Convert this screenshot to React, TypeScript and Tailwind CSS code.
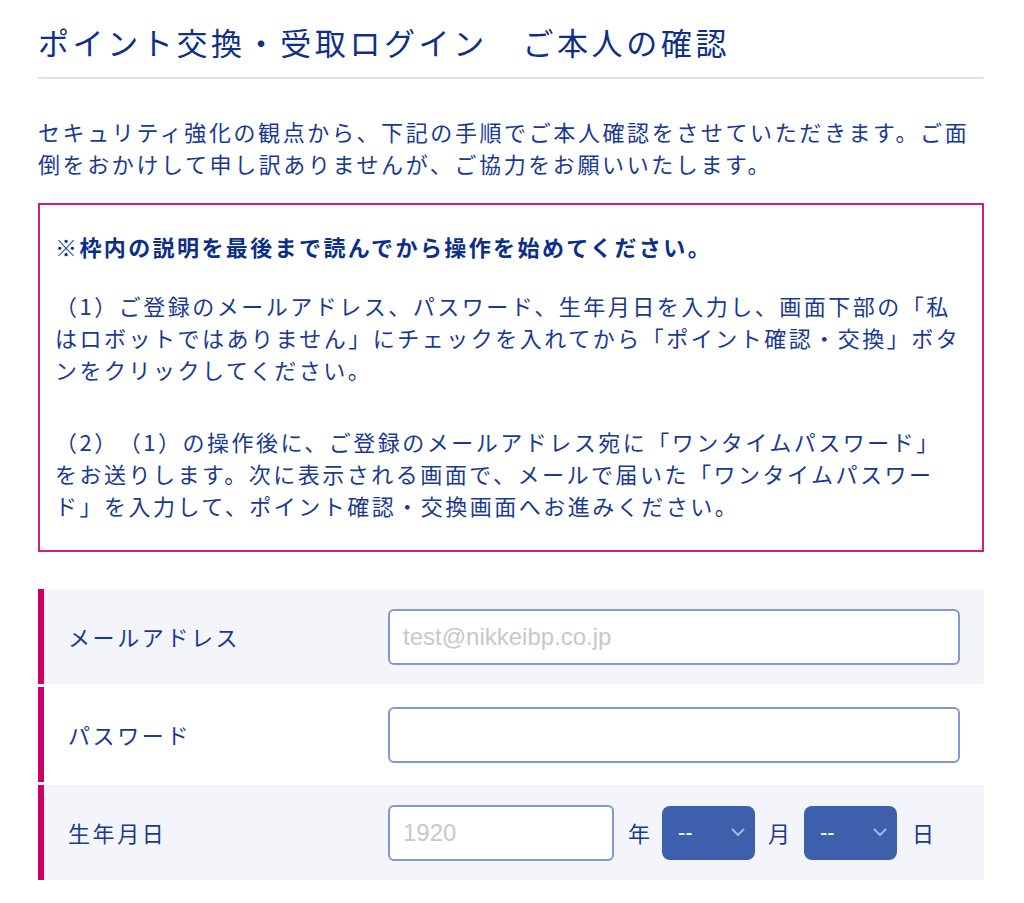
const font = { fontFamily: '"Noto Sans CJK JP", "Noto Sans", sans-serif' };

function Chevron() {
  return (
    <svg width="14" height="9" viewBox="0 0 14 9" fill="none" className="shrink-0">
      <path d="M1.5 1.5 7 7l5.5-5.5" stroke="#a8b8e0" strokeWidth="2" strokeLinecap="round" strokeLinejoin="round" />
    </svg>
  );
}

function DaySelect() {
  return (
    <div className="flex h-[54px] w-[93px] items-center justify-between rounded-[8px] bg-[#3e5fab] pl-[16px] pr-[10px]">
      <span className="text-[22px] leading-none text-white" style={{ fontFamily: '"Liberation Sans", Arial, sans-serif' }}>
        --
      </span>
      <Chevron />
    </div>
  );
}

type Row = { label: string; shaded: boolean; body: React.ReactNode };

export default function App() {
  const rows: Row[] = [
    {
      label: "メールアドレス",
      shaded: true,
      body: (
        <div className="flex h-[56px] w-[572px] items-center rounded-[6px] border-2 border-[#8199d1] bg-white pl-[13px]">
          <span className="text-[24px] text-[#c8c8c8]" style={{ fontFamily: '"Liberation Sans", Arial, sans-serif' }}>
            test@nikkeibp.co.jp
          </span>
        </div>
      ),
    },
    {
      label: "パスワード",
      shaded: false,
      body: <div className="h-[56px] w-[572px] rounded-[6px] border-2 border-[#8199d1] bg-white" />,
    },
    {
      label: "生年月日",
      shaded: true,
      body: (
        <div className="flex items-center">
          <div className="flex h-[56px] w-[226px] items-center rounded-[6px] border-2 border-[#8199d1] bg-white pl-[13px]">
            <span className="text-[24px] text-[#c8c8c8]" style={{ fontFamily: '"Liberation Sans", Arial, sans-serif' }}>
              1920
            </span>
          </div>
          <span className="ml-[14px] mr-[12px] text-[22px] text-[#1a3a8f]">年</span>
          <DaySelect />
          <span className="ml-[13px] mr-[14px] text-[22px] text-[#1a3a8f]">月</span>
          <DaySelect />
          <span className="ml-[15px] text-[22px] text-[#1a3a8f]">日</span>
        </div>
      ),
    },
  ];

  return (
    <main
      className="bg-white pl-[38px] pr-[40px] pt-[22px] pb-[24px] text-[#1a3a8f] [text-spacing-trim:space-all]"
      style={font}
    >
      <h1 className="border-b-2 border-[#dfe3ee] pb-[15px] text-[31px] leading-[40px] tracking-[3.6px] text-[#0f2f88]">
        ポイント交換・受取ログイン　ご本人の確認
      </h1>

      <p className="mt-[36px] text-[22px] leading-[32px] tracking-[2.6px]">
        セキュリティ強化の観点から、下記の手順でご本人確認をさせていただきます。ご面倒をおかけして申し訳ありませんが、ご協力をお願いいたします。
      </p>

      <div className="mt-[24px] border-2 border-[#d81b79] px-[15px] pt-[25px] pb-[29px] text-[22px] leading-[32px] tracking-[2.5px]">
        <p className="font-bold text-[#0c2f8a] tracking-[2.4px]">※枠内の説明を最後まで読んでから操作を始めてください。</p>
        <p className="mt-[27px]">
          （1）ご登録のメールアドレス、パスワード、生年月日を入力し、画面下部の「私はロボットではありません」にチェックを入れてから「ポイント確認・交換」ボタンをクリックしてください。
        </p>
        <p className="mt-[40px]">
          （2）（1）の操作後に、ご登録のメールアドレス宛に「ワンタイムパスワード」
          <br />
          をお送りします。次に表示される画面で、メールで届いた「ワンタイムパスワード」を入力して、ポイント確認・交換画面へお進みください。
        </p>
      </div>

      <div className="mt-[37px] flex flex-col gap-[3px]">
        {rows.map((r) => (
          <div
            key={r.label}
            className={`flex h-[95px] items-center border-l-[6px] border-[#cc0066] ${r.shaded ? "bg-[#f3f5fa]" : "bg-white"}`}
          >
            <div className="w-[344px] shrink-0 pl-[24px] text-[22px] tracking-[2.6px] text-[#1a3a8f]">{r.label}</div>
            {r.body}
          </div>
        ))}
      </div>
    </main>
  );
}
